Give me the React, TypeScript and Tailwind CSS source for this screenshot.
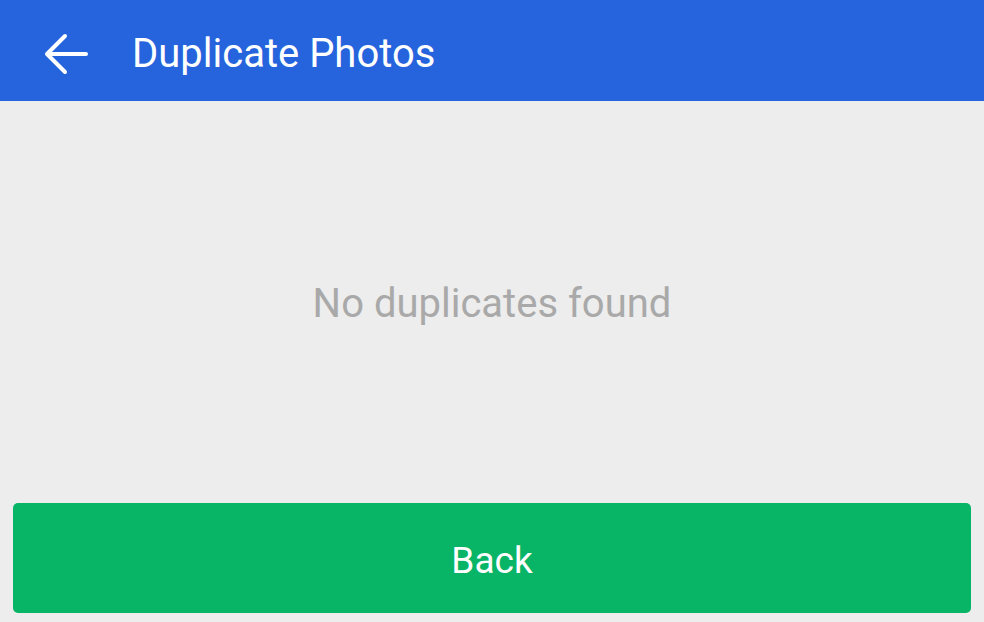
export default function App() {
  return (
    <div
      className="w-[984px] h-[622px] flex flex-col bg-[#ededed] overflow-hidden"
      style={{ fontFamily: "Roboto, 'Liberation Sans', sans-serif" }}
    >
      <header className="h-[101px] shrink-0 bg-[#2564dc] flex items-center pt-[6px]">
        <button className="ml-[42px] w-[48px] h-[48px] flex items-center justify-center text-white">
          <svg width="44" height="42" viewBox="0 0 44 42" fill="none" stroke="currentColor" strokeWidth="4" strokeLinecap="round" strokeLinejoin="round">
            <path d="M42 21H4" />
            <path d="M21 3L3 21l18 18" />
          </svg>
        </button>
        <h1 className="ml-[42px] text-[40px] text-white font-normal leading-none">
          Duplicate Photos
        </h1>
      </header>
      <main className="flex-1 flex items-center justify-center">
        <p className="text-[40px] text-[#a9a9a9] leading-none mt-[3px]">No duplicates found</p>
      </main>
      <div className="px-[13px] pb-[9px]">
        <button className="w-full h-[110px] rounded-[5px] bg-[#08b466] text-white text-[37px] flex items-center justify-center pt-[5px]">
          Back
        </button>
      </div>
    </div>
  );
}
